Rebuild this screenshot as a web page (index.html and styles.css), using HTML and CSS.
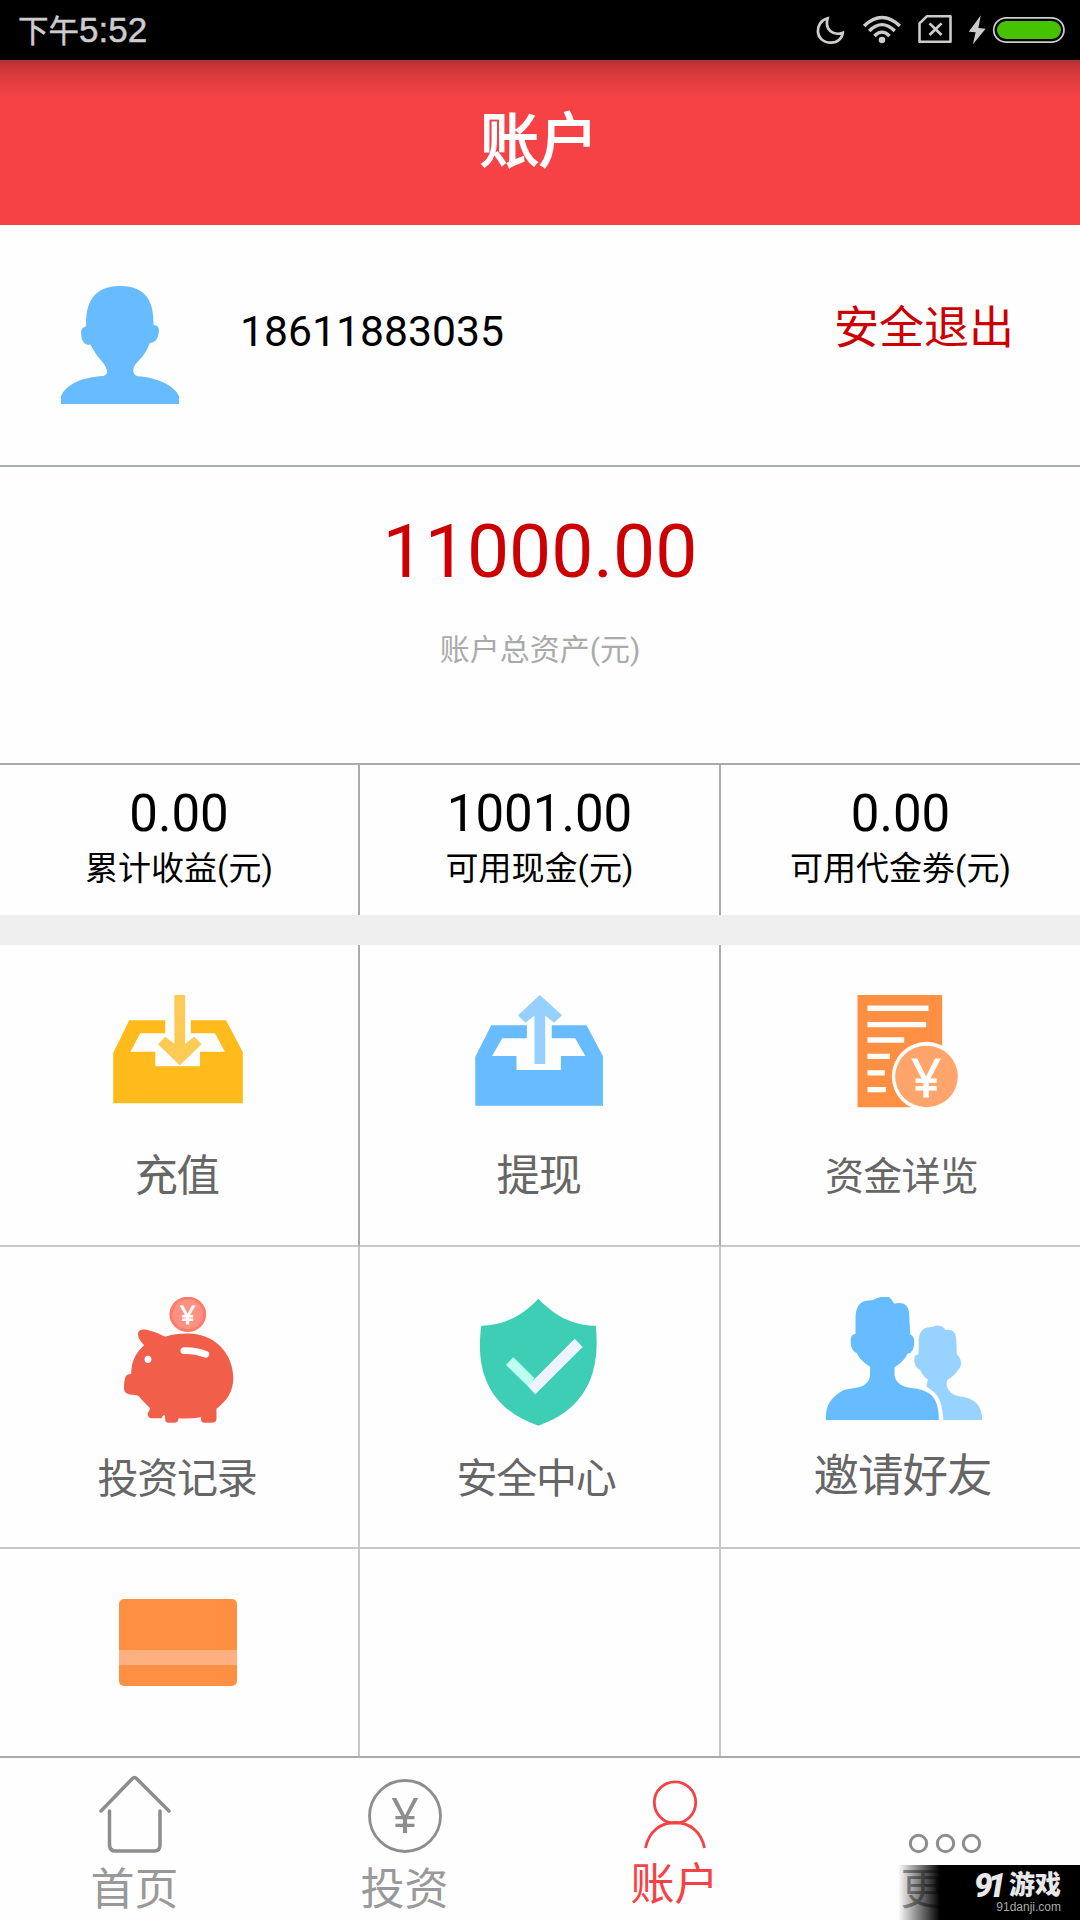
FILE: index.html
```html
<!DOCTYPE html>
<html lang="zh-CN">
  <head>
    <meta charset="UTF-8" />
    <meta name="viewport" content="width=device-width, initial-scale=1.0" />
    <title>账户</title>
    <link rel="stylesheet" href="styles.css">
  </head>
  <body>
    <div class="status-bar">
      <div class="status-time"><span class="status-cjk">下午</span>5:52</div>
      <svg class="status-icons" viewBox="784 30 755 120" preserveAspectRatio="none">
        <g fill="none" stroke="#ccc">
          <path stroke-width="8" d="M835 55C795 66 797 128 845 128C864 128 878 115 879 98C850 109 826 88 835 55Z" />
          <path stroke-width="10" d="M941 78Q993 27 1045 78M956 93Q993 55 1030 93M971 108Q993 85 1015 108" />
          <path stroke-width="7.500" stroke-linejoin="round" d="M1102 70L1123 49H1192V125H1102Z" />
          <path stroke-width="8" d="M1131 70L1166 105M1166 70L1131 105" />
          <rect stroke-width="5" x="1317.500" y="53.500" width="204" height="73" rx="37" />
        </g>
        <circle cx="993" cy="120" r="9.500" fill="#ccc" />
        <path fill="#ccc" d="M1280 46L1245 95L1265 97L1257 133L1294 86L1273 84Z" />
        <rect x="1327" y="63" width="186" height="54" rx="27" fill="#46c300" />
      </svg>
    </div>

    <div class="header">账户</div>

    <div class="profile">
      <svg class="avatar" viewBox="177 138 343 354" preserveAspectRatio="none">
        <path fill="#66bcff" d="M177 492V468C195 430 240 412 300 408Q308 405 311 398Q312 383 295 363Q278 345 262 313Q245 320 237 295Q230 262 250 259C248 190 270 138 349 138C428 138 447 190 446 254Q465 255 461 280Q458 308 435 309Q425 340 402 363Q384 380 388 398Q390 405 400 409C455 413 505 435 520 468V492Z" />
      </svg>
      <div class="phone">18611883035</div>
      <div class="logout">安全退出</div>
    </div>

    <div class="total">
      <div class="total-num">11000.00</div>
      <div class="total-text">账户总资产(元)</div>
    </div>

    <div class="stats">
      <div class="stat">
        <div class="stat-num">0.00</div>
        <div class="stat-text">累计收益(元)</div>
      </div>
      <div class="stat">
        <div class="stat-num">1001.00</div>
        <div class="stat-text">可用现金(元)</div>
      </div>
      <div class="stat">
        <div class="stat-num">0.00</div>
        <div class="stat-text">可用代金劵(元)</div>
      </div>
    </div>

    <div class="menu">
      <div class="menu-item first-row">
        <svg class="menu-icon" viewBox="49.700 135 522.700 390" preserveAspectRatio="none">
          <path fill="#ffbb1c" d="M181 211H275V250H210L184 305H249V349H366V305H431L405 250H342V211H434L478 307V460H139V309Z" />
          <path fill="#fdca55" d="M299 135H327V281L351 260L370 283L313 346L256 283L275 260L299 281Z" />
        </svg>
        <div class="menu-text">充值</div>
      </div>
      <div class="menu-item first-row">
        <svg class="menu-icon" viewBox="993 135 522.700 390" preserveAspectRatio="none">
          <path fill="#66bcff" d="M1127 226H1220V265H1156L1129 318H1193V360H1309V318H1373L1346 265H1285V226H1376L1419 319V467H1085V321Z" />
          <path fill="#95d0ff" d="M1254 135L1312 196L1291 218L1268 197V342H1240V197L1216 218L1197 196Z" />
        </svg>
        <div class="menu-text withdraw">提现</div>
      </div>
      <div class="menu-item first-row">
        <svg class="menu-icon" viewBox="243.500 126 600 364" preserveAspectRatio="none">
          <path fill="#ff8f43" d="M413 126H667V440H413Z" />
          <path stroke="#fff" stroke-width="15" d="M443 163H626M443 209H619M443 252H553M443 298H510M443 344H495M443 391H498" />
          <ellipse cx="620" cy="354" rx="104" ry="97" fill="#fff" />
          <ellipse cx="620" cy="354" rx="94" ry="86" fill="#ffa56c" />
          <text class="yen yen-bold" transform="translate(619 411) scale(3 2.800)" font-size="52">¥</text>
        </svg>
        <div class="menu-text narrow">资金详览</div>
      </div>
      <div class="menu-item">
        <svg class="menu-icon" viewBox="49.700 111 522.700 390" preserveAspectRatio="none">
          <ellipse cx="334" cy="163" rx="48" ry="53" fill="#ff7b68" />
          <ellipse cx="334" cy="163" rx="40" ry="45" fill="#ff9182" />
          <text class="yen yen-bold" transform="translate(334 191) scale(2.613 3)" font-size="26">¥</text>
          <path fill="#f15f4b" d="M204 222C204 208 218 206 235 212C252 216 264 224 275 230C295 222 320 220 345 221C410 226 452 285 453 352C453 395 436 424 409 446V478Q408 488 398 488H376Q367 488 369 472Q340 477 310 475Q309 488 300 488H282Q275 488 275 478L274 465Q268 465 266 475H238Q229 473 229 460Q236 450 235 444Q215 422 208 411Q203 404 190 404Q168 405 167 385Q167 365 171 350Q174 343 186 341Q186 290 220 256Q204 238 204 222Z" />
          <path fill="none" stroke="#fff" stroke-width="20" stroke-linecap="round" d="M325 272Q355 271 380 283" />
          <ellipse cx="230" cy="298" rx="9" ry="11" fill="#fff" />
        </svg>
        <div class="menu-text mid">投资记录</div>
      </div>
      <div class="menu-item">
        <svg class="menu-icon" viewBox="993 111 522.700 390" preserveAspectRatio="none">
          <path fill="#3eceb6" d="M1250 116C1290 165 1340 197 1400 197C1414 345 1370 450 1250 497C1130 450 1083 345 1101 197C1160 197 1210 165 1250 116Z" />
          <path fill="#bffff2" d="M1165 315L1185 292L1240 355L1224 380Z" />
          <path fill="#edf4ff" d="M1345 236L1366 261L1242 403L1222 378Z" />
        </svg>
        <div class="menu-text mid safe">安全中心</div>
      </div>
      <div class="menu-item">
        <svg class="menu-icon" viewBox="243.500 971.600 600 364" preserveAspectRatio="none">
          <path fill="#66bcff" d="M318 1316C318 1285 322 1262 360 1238C385 1224 405 1230 430 1220C455 1205 450 1195 451 1167Q420 1150 410 1128C390 1122 390 1085 396 1080Q402 1074 407 1076V1030C408 1005 415 985 440 982L460 980Q480 968 506 971Q515 975 523 990C550 985 567 992 568 1020L571 1076Q585 1082 583 1100Q583 1128 564 1130Q550 1155 524 1168V1190C528 1215 550 1224 580 1227C620 1232 640 1245 648 1265Q657 1285 657 1316Z" />
          <path fill="#98d2ff" d="M671 1316C667 1275 660 1250 640 1236Q628 1227 620 1222L624 1202Q610 1195 601 1176C585 1170 580 1150 585 1136L596 1132L597 1090Q600 1060 622 1057L640 1055Q660 1045 678 1064Q705 1060 709 1085L711 1132Q722 1140 724 1158Q722 1172 714 1176Q705 1192 682 1204C675 1225 690 1245 720 1250C765 1254 787 1275 787 1316Z" />
        </svg>
        <div class="menu-text wide">邀请好友</div>
      </div>
      <div class="menu-item last-row"><div class="card-icon"></div></div>
      <div class="menu-item last-row"></div>
      <div class="menu-item last-row"></div>
    </div>

    <div class="tab-bar">
      <div class="tab">
        <svg class="tab-icon" viewBox="0 0 90 84" fill="none" stroke="#8d8d8d" stroke-width="3.500" stroke-linecap="round">
          <path d="M11 37L42.500 4.500Q44.500 2.500 46.500 4.500L79 37" />
          <path d="M19.500 37V71Q20 77 25 77H64.500Q70 77 70 71V37" />
        </svg>
        <div class="tab-text">首页</div>
      </div>
      <div class="tab">
        <svg class="tab-icon" viewBox="0 0 90 84">
          <circle cx="45" cy="42" r="35.500" fill="none" stroke="#8d8d8d" stroke-width="2.800" />
          <text class="tab-yen" x="45" y="59" font-size="49">¥</text>
        </svg>
        <div class="tab-text">投资</div>
      </div>
      <div class="tab active">
        <svg class="tab-icon" viewBox="0 0 90 84" fill="none" stroke="#f64245" stroke-width="2.800">
          <circle cx="45" cy="28.500" r="20.700" />
          <path d="M15.500 74C19 57 31 48.500 45 48.500S71 57 74.500 74" />
        </svg>
        <div class="tab-text">账户</div>
      </div>
      <div class="tab">
        <svg class="tab-icon" viewBox="0 0 90 84" fill="none" stroke="#8d8d8d" stroke-width="3">
          <circle cx="18.500" cy="69.500" r="8.200" />
          <circle cx="45.500" cy="69.500" r="8.200" />
          <circle cx="71.500" cy="69.500" r="8.200" />
        </svg>
        <div class="tab-text">更多</div>
      </div>
    </div>

    <div class="watermark">
      <div class="watermark-name"><span class="watermark-91">91</span><span>游戏</span></div>
      <div class="watermark-url">91danji.com</div>
    </div>
  </body>
</html>
```
FILE: styles.css
```css
body {
  margin: 0;
  width: 1080px;
  height: 1920px;
  overflow: hidden;
  display: flex;
  flex-direction: column;
  position: relative;
  background-color: #fefefe;
  color: #000;
  font-family: Roboto, "Noto Sans CJK SC", sans-serif;
}
.status-bar {
  height: 60px;
  display: flex;
  justify-content: space-between;
  background-color: #000;
}
.status-time {
  padding-left: 18px;
  color: #ccc;
  font-family: "Liberation Sans", "Noto Sans CJK SC", sans-serif;
  font-size: 35px;
  line-height: 59px;
  -webkit-text-stroke: 0.5px #ccc;
}
.status-cjk {
  font-size: 30.5px;
}
.status-icons {
  width: 260px;
  height: 40px;
  margin: 10px 10px 0 0;
}
.header {
  height: 165px;
  background: linear-gradient(#b03335 0 2px, #c23335 3px, #dc3b3d 16px, #f64245 38px);
  color: #fff;
  font-size: 59px;
  line-height: 164px;
  text-align: center;
  text-indent: -2px;
  -webkit-text-stroke: 1.8px #fff;
}
.profile {
  height: 240px;
  display: flex;
  align-items: flex-start;
  border-bottom: 2px solid #aaaeab;
}
.avatar {
  width: 118px;
  height: 118px;
  margin: 61px 0 0 61px;
}
.phone {
  margin: 76px 0 0 61px;
  font-size: 42.7px;
  line-height: 60px;
}
.logout {
  margin: 74px 66px 0 auto;
  color: #c00;
  font-size: 45px;
  line-height: 60px;
}
.total {
  height: 296px;
  border-bottom: 2px solid #aaa;
  text-align: center;
}
.total-num {
  padding-top: 39px;
  color: #c00;
  font-size: 75px;
  line-height: 90px;
}
.total-text {
  margin-top: 32px;
  color: #aaa;
  font-size: 30px;
  line-height: 44px;
}
.stats {
  height: 150px;
  display: grid;
  grid-template-columns: 360px 361px 359px;
  border-bottom: 30px solid #efefef;
  text-align: center;
}
.stat,
.menu-item {
  border-right: 2px solid #aaa;
}
.stat:last-child,
.menu-item:nth-child(3n) {
  border-right: none;
}
.stat-num {
  padding-top: 19px;
  font-size: 51px;
  line-height: 60px;
}
.stat-text {
  margin-top: 2px;
  font-size: 33px;
  line-height: 46px;
}
.menu {
  display: grid;
  grid-template-columns: 360px 361px 359px;
  grid-template-rows: 302px 302px 207px;
}
.menu-item {
  display: flex;
  flex-direction: column;
  align-items: center;
  padding-top: 50px;
  border-color: #c8c8c8;
  border-bottom: 2px solid #c8c8c8;
}
.first-row {
  border-right-color: #aaa;
}
.last-row {
  border-bottom: none;
}
.menu-icon {
  width: 200px;
  height: 130px;
}
.menu-text {
  color: #666;
  font-size: 43.5px;
  letter-spacing: -1.5px;
  line-height: 60px;
  margin-top: 22px;
  padding-right: 5px;
}
.withdraw {
  padding-right: 2px;
}
.narrow {
  font-size: 39px;
  letter-spacing: -0.8px;
  padding: 0 0 0 2px;
}
.mid {
  font-size: 41px;
  letter-spacing: -1.2px;
  padding-right: 4px;
}
.safe {
  padding-right: 7px;
}
.wide {
  font-size: 45.5px;
  letter-spacing: -1px;
  margin-top: 20px;
  padding: 0 0 0 4px;
}
.yen,
.tab-yen {
  font-family: "Noto Sans", sans-serif;
  text-anchor: middle;
  fill: #fff;
}
.yen-bold {
  stroke: #fff;
  stroke-width: 0.8px;
}
.tab-yen {
  fill: #8d8d8d;
}
.card-icon {
  width: 118px;
  height: 87px;
  margin-right: 2px;
  border-radius: 5px;
  background: linear-gradient(#ff8f43 51px, #fdb080 51px 66px, #ff8f43 66px);
}
.tab-bar {
  height: 162px;
  display: grid;
  grid-template-columns: repeat(4, 1fr);
  border-top: 2px solid #aaa;
  text-align: center;
}
.tab {
  color: #999;
}
.tab-icon {
  display: block;
  width: 90px;
  height: 84px;
  margin: 16px auto 0;
}
.tab-text {
  margin-top: 2px;
  font-size: 44px;
  line-height: 60px;
  text-indent: -1px;
}
.active .tab-text {
  margin-top: -3px;
  color: #f64245;
}
.watermark {
  position: absolute;
  right: 0;
  bottom: 0;
  width: 163px;
  height: 55px;
  padding-right: 19px;
  background: linear-gradient(to right, transparent, #000 42px);
  text-align: right;
}
.watermark-name {
  height: 34px;
  display: flex;
  justify-content: flex-end;
  color: #e8e8e8;
  font-size: 26px;
  font-weight: 900;
  line-height: 41px;
}
.watermark-91 {
  margin-right: 8px;
  font-size: 33px;
  font-style: italic;
  letter-spacing: -5px;
}
.watermark-url {
  color: #aaa;
  font-family: "Liberation Sans", sans-serif;
  font-size: 12px;
  line-height: 16px;
}
```
